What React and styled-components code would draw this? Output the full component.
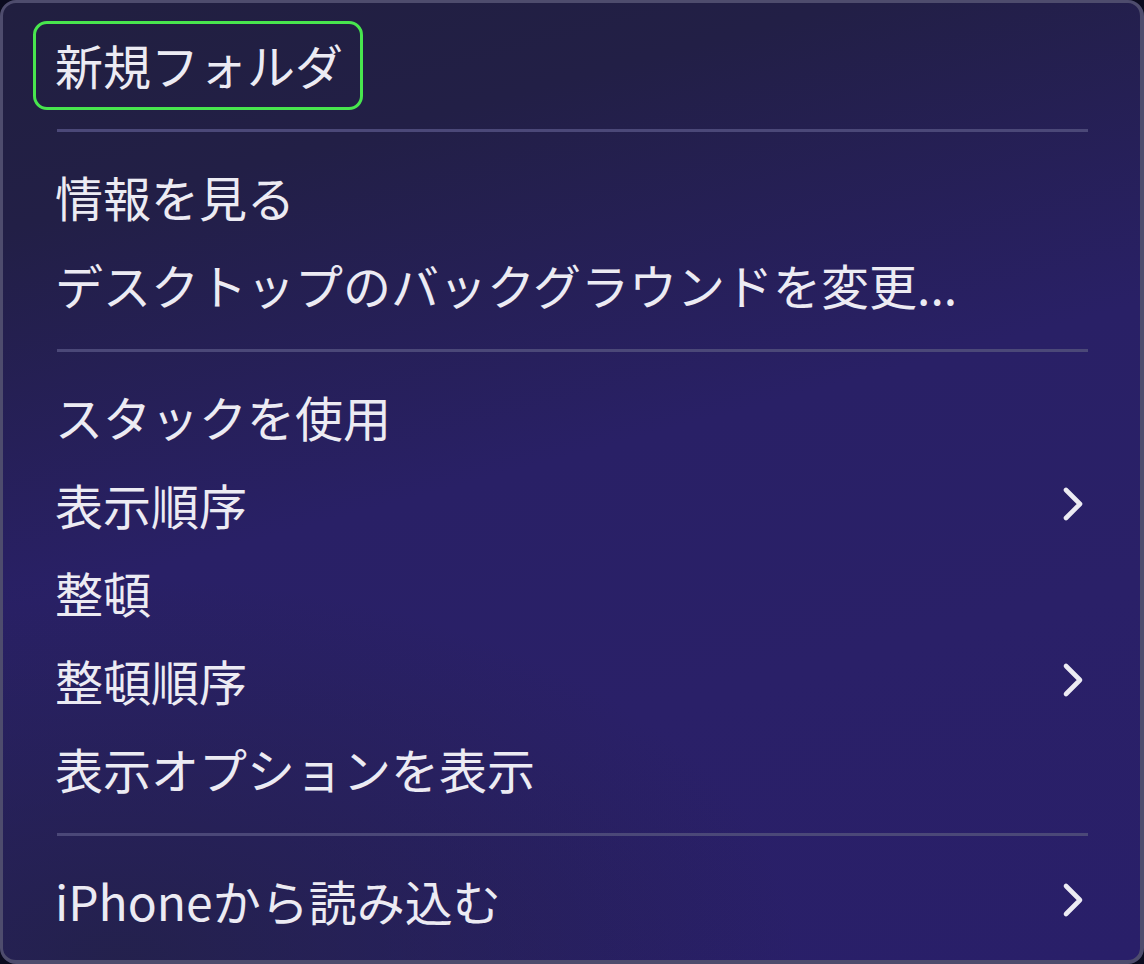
import React from 'react';
import styled, { createGlobalStyle } from 'styled-components';

const GlobalStyle = createGlobalStyle`
  html, body {
    margin: 0;
    padding: 0;
    background: #0b0b1f;
  }
  body {
    font-family: "Noto Sans CJK JP", "Noto Sans", sans-serif;
  }
`;

const menuGroups = [
  [{ label: '新規フォルダ', focused: true }],
  [{ label: '情報を見る' }, { label: 'デスクトップのバックグラウンドを変更...' }],
  [
    { label: 'スタックを使用' },
    { label: '表示順序', submenu: true },
    { label: '整頓' },
    { label: '整頓順序', submenu: true },
    { label: '表示オプションを表示' },
  ],
  [{ label: 'iPhoneから読み込む', submenu: true }],
];

const Chevron = () => (
  <svg width="22" height="36" viewBox="0 0 22 36" fill="none">
    <polyline
      points="4,4 18,18 4,32"
      stroke="#ecebf3"
      strokeWidth="4.6"
      strokeLinecap="round"
      strokeLinejoin="round"
    />
  </svg>
);

function App() {
  return (
    <>
      <GlobalStyle />
      <Menu>
        {menuGroups.map((group, gi) => (
          <React.Fragment key={gi}>
            {gi > 0 && <Separator />}
            {group.map(item => (
              <Item key={item.label} $focused={item.focused}>
                <Label>{item.label}</Label>
                {item.submenu && <Chevron />}
              </Item>
            ))}
          </React.Fragment>
        ))}
      </Menu>
    </>
  );
}

const Menu = styled.div`
  box-sizing: border-box;
  width: 1144px;
  height: 964px;
  display: flex;
  flex-direction: column;
  padding: 18px 36px 15px 30px;
  border: 3px solid #4e4c6d;
  border-right-width: 4px;
  border-bottom-width: 4px;
  border-radius: 16px;
  background:
    radial-gradient(ellipse 60% 40% at 10% 100%, rgba(34, 33, 70, 0.8), rgba(34, 33, 70, 0) 100%),
    linear-gradient(165deg, #211f40 0%, #221f46 18%, #292066 48%, #2a2068 70%, #291f69 100%);
  overflow: hidden;
`;

const Item = styled.div`
  box-sizing: border-box;
  height: 89px;
  flex: none;
  display: flex;
  align-items: center;
  justify-content: space-between;
  align-self: ${props => (props.$focused ? 'flex-start' : 'stretch')};
  padding: 0 17px 3px 19px;
  border: 3.5px solid ${props => (props.$focused ? '#48e64e' : 'transparent')};
  border-radius: 14px;
  color: #ecebf3;
  margin-bottom: -1px;
`;

const Label = styled.span`
  font-size: 48px;
  line-height: 1;
  white-space: nowrap;
`;

const Separator = styled.div`
  flex: none;
  height: 3px;
  margin: 20px 16px 21px 24px;
  background: #4b4878;
`;

export default App;
